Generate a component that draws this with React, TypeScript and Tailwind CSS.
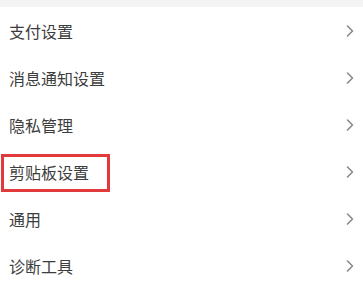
const ITEMS = ["支付设置", "消息通知设置", "隐私管理", "剪贴板设置", "通用", "诊断工具"]

function Chevron() {
	return (
		<svg width="8" height="12" viewBox="0 0 8 12" fill="none" className="shrink-0">
			<path d="M1.5 1 L6.5 6 L1.5 11" stroke="#8a8a8a" strokeWidth="1.6" strokeLinecap="round" strokeLinejoin="round" />
		</svg>
	)
}

export default function App() {
	return (
		<div
			className="w-[363px] h-[286px] overflow-hidden bg-white"
			style={{ fontFamily: '"Noto Sans CJK SC", "Noto Sans", sans-serif' }}
		>
			<div className="h-[7px] bg-[#f3f3f3]" />
			{ITEMS.map((label) => (
				<div key={label} className="relative flex h-[47px] items-center justify-between pl-[9px] pr-[9px]">
					<span className="text-[16px] leading-none text-[#3d3d3d]">{label}</span>
					<Chevron />
					{label === "剪贴板设置" && (
						<div className="absolute left-[1px] top-[6px] h-[38px] w-[109px] border-[3px] border-[#e23a3a]" />
					)}
				</div>
			))}
		</div>
	)
}
